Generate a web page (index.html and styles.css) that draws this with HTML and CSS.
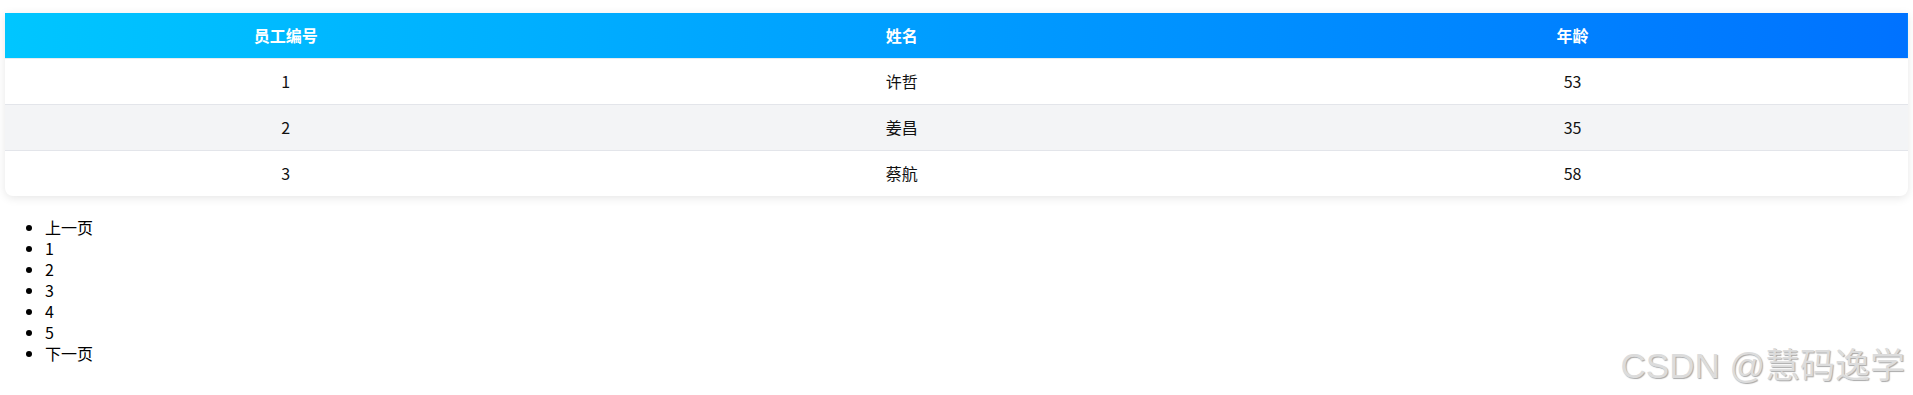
FILE: index.html
```html
<!DOCTYPE html>
<html lang="zh-CN">
<head>
<meta charset="utf-8">
<title>员工列表</title>
<link rel="stylesheet" href="styles.css">
</head>
<body>
<div class="page">
  <div class="table-card">
    <table class="staff">
      <colgroup>
        <col class="c-id">
        <col class="c-name">
        <col class="c-age">
      </colgroup>
      <thead>
        <tr><th>员工编号</th><th>姓名</th><th>年龄</th></tr>
      </thead>
      <tbody>
        <tr><td>1</td><td>许哲</td><td>53</td></tr>
        <tr><td>2</td><td>姜昌</td><td>35</td></tr>
        <tr><td>3</td><td>蔡航</td><td>58</td></tr>
      </tbody>
    </table>
  </div>
  <ul class="pager">
    <li>上一页</li>
    <li>1</li>
    <li>2</li>
    <li>3</li>
    <li>4</li>
    <li>5</li>
    <li>下一页</li>
  </ul>
</div>
<div class="watermark">CSDN @慧码逸学</div>
</body>
</html>
```
FILE: styles.css
```css
html, body {
  margin: 0;
  padding: 0;
  background: #fff;
}
body {
  font-family: "Microsoft YaHei", "Noto Sans CJK SC", "Noto Sans", sans-serif;
  font-size: 16px;
  color: #000;
  height: 395px;
  overflow: hidden;
  position: relative;
}
.page {
  padding: 13px 5px 0 5px;
}
.table-card {
  border-radius: 0 0 8px 8px;
  box-shadow: 0 2px 10px rgba(0, 0, 0, 0.1);
  overflow: hidden;
  background: #fff;
}
.staff {
  width: 100%;
  border-collapse: collapse;
  table-layout: fixed;
}
.c-id { width: 29.5%; }
.c-name { width: 35.25%; }
.c-age { width: 35.25%; }
.staff thead tr {
  background: linear-gradient(to right, #00c6ff, #0072ff);
  border-bottom: 1px solid #e8ebef;
}
.staff th {
  color: #fff;
  font-weight: bold;
  line-height: 21px;
  padding: 12px 0;
  text-align: center;
}
.staff td {
  line-height: 21px;
  padding: 12px 0;
  text-align: center;
  color: #111;
}
.staff tbody tr {
  border-bottom: 1px solid #e3e5ea;
}
.staff tbody tr:last-child {
  border-bottom: none;
}
.staff tbody tr:nth-child(even) {
  background: #f3f4f6;
}
.pager {
  margin: 21px 0 0 0;
  padding-left: 40px;
  line-height: 21px;
}
.watermark {
  position: absolute;
  right: 8px;
  bottom: 9px;
  font-family: "Liberation Sans", "Noto Sans CJK SC", sans-serif;
  font-size: 35px;
  line-height: 40px;
  color: #dcdcdc;
  text-shadow: 1px 1px 1px #a9a9a9;
  white-space: nowrap;
}
```
